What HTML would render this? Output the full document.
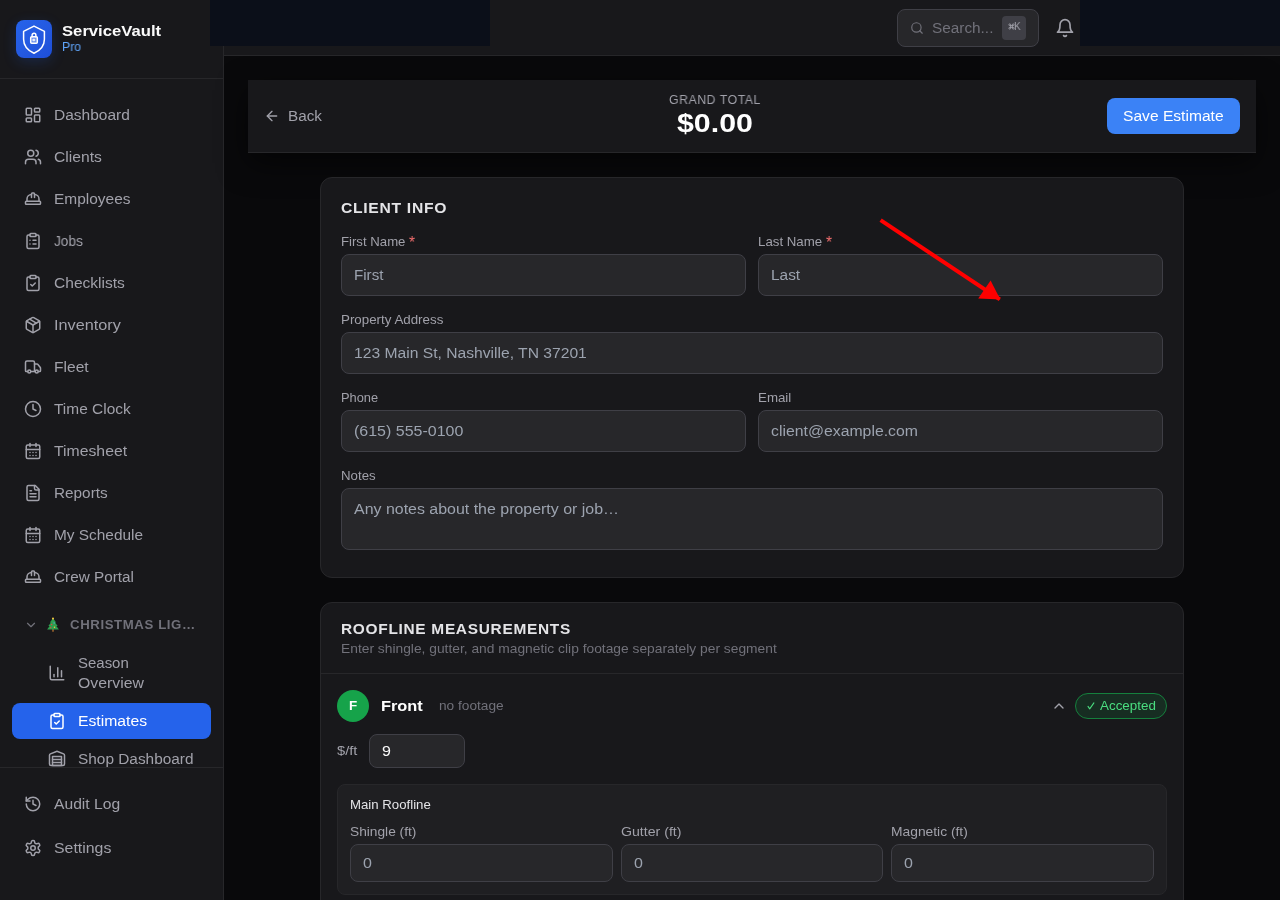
<!DOCTYPE html>
<html lang="en"><head><meta charset="utf-8"><title>ServiceVault Pro - New Estimate</title>
<style>
*{box-sizing:border-box;margin:0;padding:0}
html,body{width:1280px;height:900px;overflow:hidden;background:#09090b}
body{position:relative;font-family:"Liberation Sans",sans-serif;font-size:14px;color:#a1a1aa}
.t{position:absolute;white-space:nowrap;transform-origin:0 50%;will-change:transform}
.ic{position:absolute;display:block;overflow:visible}
.hl{position:absolute;height:1px;background:#27272a}
#sidebar{position:absolute;left:0;top:0;width:224px;height:900px;background:#18181b;border-right:1px solid #27272a}
#logo{position:absolute;left:16px;top:20px;width:36px;height:38px;border-radius:8px;background:linear-gradient(135deg,#2563eb 0%,#2459e0 55%,#1d4ed8 100%);box-shadow:0 4px 14px rgba(37,99,235,.2)}
#logo svg{display:block}
#subclip{position:absolute;left:0;top:640px;width:223px;height:127px;overflow:hidden}
#subclip>*{margin-top:-640px}
#topbar{position:absolute;left:224px;top:0;width:1056px;height:56px;background:#18181b;border-bottom:1px solid #27272a}
#search{position:absolute;left:897px;top:9px;width:142px;height:38px;border-radius:8px;background:#27272a;border:1px solid #3f3f46}
#kbd{position:absolute;left:1002px;top:16px;width:24px;height:24px;border-radius:4px;background:#3f3f46}
.navy{position:absolute;background:#0b0f19}
#sticky{position:absolute;left:248px;top:80px;width:1008px;height:73px;background:#18181b;border-bottom:1px solid #27272a;box-shadow:0 10px 30px rgba(0,0,0,.55)}
#save{position:absolute;left:1107px;top:98px;width:133px;height:36px;border-radius:8px;background:#3b82f6}
.card{position:absolute;background:#18181b;border:1px solid #27272a;border-radius:12px}
.inp{position:absolute;background:#27272a;border:1px solid #3f3f46;border-radius:8px}
#avatar{position:absolute;left:337px;top:690px;width:32px;height:32px;border-radius:50%;background:#16a34a}
#badge{position:absolute;left:1075px;top:693px;width:92px;height:26px;border-radius:13px;background:#172d22;border:1px solid #15803d}
#inner{position:absolute;left:337px;top:784px;width:830px;height:111px;border-radius:8px;background:#1f1f22;border:1px solid #27272a}
</style></head>
<body>
<div id="sidebar">
<div id="logo"><svg width="36" height="38" viewBox="0 0 36 38" fill="none" stroke="#fff" stroke-width="1.5" stroke-linejoin="round" stroke-linecap="round"><path d="M18 6.1 L28.4 11.3 V19.2 C28.4 26 24.2 30.4 18 33.3 C11.8 30.4 7.6 26 7.6 19.2 V11.3 Z"/><rect x="14.7" y="16.8" width="6.6" height="6.4" rx="1" fill="rgba(255,255,255,.35)"/><path d="M16.1 16.8 V15.2 a1.9 1.9 0 0 1 3.8 0 V16.8"/><rect x="17.3" y="19.3" width="1.4" height="1.4" stroke-width="1"/></svg></div>
<div class="t" style="left:62px;top:21.0px;line-height:20px;color:#fafafa;font-size:14.7px;transform:scaleX(1.1342);font-weight:700;">ServiceVault</div>
<div class="t" style="left:62px;top:39.0px;line-height:16px;color:#60a5fa;font-size:12.6px;transform:scaleX(0.9709);">Pro</div>
<div class="hl" style="left:0;top:78px;width:223px"></div>
<svg class="ic" style="left:24px;top:106px" width="18" height="18" viewBox="0 0 24 24" fill="none" stroke="#a1a1aa" stroke-width="2" stroke-linecap="round" stroke-linejoin="round"><rect width="7" height="9" x="3" y="3" rx="1"/><rect width="7" height="5" x="14" y="3" rx="1"/><rect width="7" height="9" x="14" y="12" rx="1"/><rect width="7" height="5" x="3" y="16" rx="1"/></svg>
<div class="t" style="left:54px;top:105.0px;line-height:20px;color:#a1a1aa;font-size:14.7px;transform:scaleX(1.0562);">Dashboard</div>
<svg class="ic" style="left:24px;top:148px" width="18" height="18" viewBox="0 0 24 24" fill="none" stroke="#a1a1aa" stroke-width="2" stroke-linecap="round" stroke-linejoin="round"><path d="M16 21v-2a4 4 0 0 0-4-4H6a4 4 0 0 0-4 4v2"/><circle cx="9" cy="7" r="4"/><path d="M22 21v-2a4 4 0 0 0-3-3.87"/><path d="M16 3.13a4 4 0 0 1 0 7.75"/></svg>
<div class="t" style="left:54px;top:147.0px;line-height:20px;color:#a1a1aa;font-size:14.7px;transform:scaleX(1.0644);">Clients</div>
<svg class="ic" style="left:24px;top:190px" width="18" height="18" viewBox="0 0 24 24" fill="none" stroke="#a1a1aa" stroke-width="2" stroke-linecap="round" stroke-linejoin="round"><path d="M2 18a1 1 0 0 0 1 1h18a1 1 0 0 0 1-1v-2a1 1 0 0 0-1-1H3a1 1 0 0 0-1 1v2z"/><path d="M10 10V5a1 1 0 0 1 1-1h2a1 1 0 0 1 1 1v5"/><path d="M4 15v-3a6 6 0 0 1 6-6"/><path d="M14 6a6 6 0 0 1 6 6v3"/></svg>
<div class="t" style="left:54px;top:189.0px;line-height:20px;color:#a1a1aa;font-size:14.7px;transform:scaleX(1.0538);">Employees</div>
<svg class="ic" style="left:24px;top:232px" width="18" height="18" viewBox="0 0 24 24" fill="none" stroke="#a1a1aa" stroke-width="2" stroke-linecap="round" stroke-linejoin="round"><rect width="8" height="4" x="8" y="2" rx="1" ry="1"/><path d="M16 4h2a2 2 0 0 1 2 2v14a2 2 0 0 1-2 2H6a2 2 0 0 1-2-2V6a2 2 0 0 1 2-2h2"/><path d="M12 11h4"/><path d="M12 16h4"/><path d="M8 11h.01"/><path d="M8 16h.01"/></svg>
<div class="t" style="left:54px;top:231.0px;line-height:20px;color:#a1a1aa;font-size:14.7px;transform:scaleX(0.9299);">Jobs</div>
<svg class="ic" style="left:24px;top:274px" width="18" height="18" viewBox="0 0 24 24" fill="none" stroke="#a1a1aa" stroke-width="2" stroke-linecap="round" stroke-linejoin="round"><rect width="8" height="4" x="8" y="2" rx="1" ry="1"/><path d="M16 4h2a2 2 0 0 1 2 2v14a2 2 0 0 1-2 2H6a2 2 0 0 1-2-2V6a2 2 0 0 1 2-2h2"/><path d="m9 14 2 2 4-4"/></svg>
<div class="t" style="left:54px;top:273.0px;line-height:20px;color:#a1a1aa;font-size:14.7px;transform:scaleX(1.0588);">Checklists</div>
<svg class="ic" style="left:24px;top:316px" width="18" height="18" viewBox="0 0 24 24" fill="none" stroke="#a1a1aa" stroke-width="2" stroke-linecap="round" stroke-linejoin="round"><path d="m7.5 4.27 9 5.15"/><path d="M21 8a2 2 0 0 0-1-1.73l-7-4a2 2 0 0 0-2 0l-7 4A2 2 0 0 0 3 8v8a2 2 0 0 0 1 1.73l7 4a2 2 0 0 0 2 0l7-4A2 2 0 0 0 21 16Z"/><path d="m3.3 7 8.7 5 8.7-5"/><path d="M12 22V12"/></svg>
<div class="t" style="left:54px;top:315.0px;line-height:20px;color:#a1a1aa;font-size:14.7px;transform:scaleX(1.1059);">Inventory</div>
<svg class="ic" style="left:24px;top:358px" width="18" height="18" viewBox="0 0 24 24" fill="none" stroke="#a1a1aa" stroke-width="2" stroke-linecap="round" stroke-linejoin="round"><path d="M14 18V6a2 2 0 0 0-2-2H4a2 2 0 0 0-2 2v11a1 1 0 0 0 1 1h2"/><path d="M15 18H9"/><path d="M19 18h2a1 1 0 0 0 1-1v-3.65a1 1 0 0 0-.22-.624l-3.48-4.35A1 1 0 0 0 17.52 8H14"/><circle cx="17" cy="18" r="2"/><circle cx="7" cy="18" r="2"/></svg>
<div class="t" style="left:54px;top:357.0px;line-height:20px;color:#a1a1aa;font-size:14.7px;transform:scaleX(1.0605);">Fleet</div>
<svg class="ic" style="left:24px;top:400px" width="18" height="18" viewBox="0 0 24 24" fill="none" stroke="#a1a1aa" stroke-width="2" stroke-linecap="round" stroke-linejoin="round"><circle cx="12" cy="12" r="10"/><polyline points="12 6 12 12 16 14"/></svg>
<div class="t" style="left:54px;top:399.0px;line-height:20px;color:#a1a1aa;font-size:14.7px;transform:scaleX(1.0519);">Time Clock</div>
<svg class="ic" style="left:24px;top:442px" width="18" height="18" viewBox="0 0 24 24" fill="none" stroke="#a1a1aa" stroke-width="2" stroke-linecap="round" stroke-linejoin="round"><path d="M8 2v4"/><path d="M16 2v4"/><rect width="18" height="18" x="3" y="4" rx="2"/><path d="M3 10h18"/><path d="M8 14h.01"/><path d="M12 14h.01"/><path d="M16 14h.01"/><path d="M8 18h.01"/><path d="M12 18h.01"/><path d="M16 18h.01"/></svg>
<div class="t" style="left:54px;top:441.0px;line-height:20px;color:#a1a1aa;font-size:14.7px;transform:scaleX(1.0744);">Timesheet</div>
<svg class="ic" style="left:24px;top:484px" width="18" height="18" viewBox="0 0 24 24" fill="none" stroke="#a1a1aa" stroke-width="2" stroke-linecap="round" stroke-linejoin="round"><path d="M15 2H6a2 2 0 0 0-2 2v16a2 2 0 0 0 2 2h12a2 2 0 0 0 2-2V7Z"/><path d="M14 2v4a2 2 0 0 0 2 2h4"/><path d="M10 9H8"/><path d="M16 13H8"/><path d="M16 17H8"/></svg>
<div class="t" style="left:54px;top:483.0px;line-height:20px;color:#a1a1aa;font-size:14.7px;transform:scaleX(1.0434);">Reports</div>
<svg class="ic" style="left:24px;top:526px" width="18" height="18" viewBox="0 0 24 24" fill="none" stroke="#a1a1aa" stroke-width="2" stroke-linecap="round" stroke-linejoin="round"><path d="M8 2v4"/><path d="M16 2v4"/><rect width="18" height="18" x="3" y="4" rx="2"/><path d="M3 10h18"/><path d="M8 14h.01"/><path d="M12 14h.01"/><path d="M16 14h.01"/><path d="M8 18h.01"/><path d="M12 18h.01"/><path d="M16 18h.01"/></svg>
<div class="t" style="left:54px;top:525.0px;line-height:20px;color:#a1a1aa;font-size:14.7px;transform:scaleX(1.0491);">My Schedule</div>
<svg class="ic" style="left:24px;top:568px" width="18" height="18" viewBox="0 0 24 24" fill="none" stroke="#a1a1aa" stroke-width="2" stroke-linecap="round" stroke-linejoin="round"><path d="M2 18a1 1 0 0 0 1 1h18a1 1 0 0 0 1-1v-2a1 1 0 0 0-1-1H3a1 1 0 0 0-1 1v2z"/><path d="M10 10V5a1 1 0 0 1 1-1h2a1 1 0 0 1 1 1v5"/><path d="M4 15v-3a6 6 0 0 1 6-6"/><path d="M14 6a6 6 0 0 1 6 6v3"/></svg>
<div class="t" style="left:54px;top:567.0px;line-height:20px;color:#a1a1aa;font-size:14.7px;transform:scaleX(1.0413);">Crew Portal</div>
<svg class="ic" style="left:24px;top:617.7px" width="14" height="14" viewBox="0 0 24 24" fill="none" stroke="#71717a" stroke-width="2" stroke-linecap="round" stroke-linejoin="round"><path d="m6 9 6 6 6-6"/></svg>
<svg class="ic" style="left:46.3px;top:617px" width="14" height="15" viewBox="0 0 14 16"><rect x="6" y="12.5" width="2" height="3.2" fill="#8b5a2b"/><path d="M7 1.4 L10.4 5.8 H9.2 L12 9.5 H10.6 L13.3 13.2 H0.7 L3.4 9.5 H2 L4.8 5.8 H3.6 Z" fill="#2e9e4f"/><circle cx="7" cy="1.7" r="1.1" fill="#f5c542"/><circle cx="5.5" cy="8" r=".8" fill="#e74c3c"/><circle cx="8.6" cy="10.8" r=".8" fill="#f5c542"/><circle cx="4.6" cy="11.4" r=".7" fill="#e74c3c"/><circle cx="8.2" cy="6.4" r=".7" fill="#5dade2"/></svg>
<div class="t" style="left:70px;top:616.5px;line-height:16px;color:#71717a;font-size:12.6px;transform:scaleX(1.0482);letter-spacing:0.572px;font-weight:700;">CHRISTMAS LIG…</div>
<div id="subclip">
<svg class="ic" style="left:48px;top:664px" width="18" height="18" viewBox="0 0 24 24" fill="none" stroke="#a1a1aa" stroke-width="2" stroke-linecap="round" stroke-linejoin="round"><path d="M3 3v16a2 2 0 0 0 2 2h16"/><path d="M18 17V9"/><path d="M13 17V5"/><path d="M8 17v-3"/></svg>
<div class="t" style="left:78px;top:653.0px;line-height:20px;color:#a1a1aa;font-size:14.7px;transform:scaleX(1.0192);">Season</div>
<div class="t" style="left:78px;top:673.0px;line-height:20px;color:#a1a1aa;font-size:14.7px;transform:scaleX(1.0759);">Overview</div>
<div style="position:absolute;left:12px;top:703px;width:199px;height:36px;border-radius:8px;background:#2563eb"></div>
<svg class="ic" style="left:48px;top:712px" width="18" height="18" viewBox="0 0 24 24" fill="none" stroke="#fff" stroke-width="2" stroke-linecap="round" stroke-linejoin="round"><rect width="8" height="4" x="8" y="2" rx="1" ry="1"/><path d="M16 4h2a2 2 0 0 1 2 2v14a2 2 0 0 1-2 2H6a2 2 0 0 1-2-2V6a2 2 0 0 1 2-2h2"/><path d="m9 14 2 2 4-4"/></svg>
<div class="t" style="left:78px;top:711.0px;line-height:20px;color:#fff;font-size:14.7px;transform:scaleX(1.0712);">Estimates</div>
<svg class="ic" style="left:48px;top:749.4px" width="18" height="18" viewBox="0 0 24 24" fill="none" stroke="#a1a1aa" stroke-width="2" stroke-linecap="round" stroke-linejoin="round"><path d="M22 8.35V20a2 2 0 0 1-2 2H4a2 2 0 0 1-2-2V8.35A2 2 0 0 1 3.26 6.5l8-3.2a2 2 0 0 1 1.48 0l8 3.2A2 2 0 0 1 22 8.35Z"/><path d="M6 18h12"/><path d="M6 14h12"/><rect width="12" height="12" x="6" y="10"/></svg>
<div class="t" style="left:78px;top:749.0px;line-height:20px;color:#a1a1aa;font-size:14.7px;transform:scaleX(1.0479);">Shop Dashboard</div>
</div>
<div class="hl" style="left:0;top:767px;width:223px"></div>
<svg class="ic" style="left:24px;top:795px" width="18" height="18" viewBox="0 0 24 24" fill="none" stroke="#a1a1aa" stroke-width="2" stroke-linecap="round" stroke-linejoin="round"><path d="M3 12a9 9 0 1 0 9-9 9.75 9.75 0 0 0-6.74 2.74L3 8"/><path d="M3 3v5h5"/><path d="M12 7v5l4 2"/></svg>
<div class="t" style="left:54px;top:794.0px;line-height:20px;color:#a1a1aa;font-size:14.7px;transform:scaleX(1.0653);">Audit Log</div>
<svg class="ic" style="left:24px;top:839px" width="18" height="18" viewBox="0 0 24 24" fill="none" stroke="#a1a1aa" stroke-width="2" stroke-linecap="round" stroke-linejoin="round"><path d="M12.22 2h-.44a2 2 0 0 0-2 2v.18a2 2 0 0 1-1 1.73l-.43.25a2 2 0 0 1-2 0l-.15-.08a2 2 0 0 0-2.73.73l-.22.38a2 2 0 0 0 .73 2.73l.15.1a2 2 0 0 1 1 1.72v.51a2 2 0 0 1-1 1.74l-.15.09a2 2 0 0 0-.73 2.73l.22.38a2 2 0 0 0 2.73.73l.15-.08a2 2 0 0 1 2 0l.43.25a2 2 0 0 1 1 1.73V20a2 2 0 0 0 2 2h.44a2 2 0 0 0 2-2v-.18a2 2 0 0 1 1-1.73l.43-.25a2 2 0 0 1 2 0l.15.08a2 2 0 0 0 2.73-.73l.22-.39a2 2 0 0 0-.73-2.73l-.15-.08a2 2 0 0 1-1-1.74v-.5a2 2 0 0 1 1-1.74l.15-.09a2 2 0 0 0 .73-2.73l-.22-.38a2 2 0 0 0-2.73-.73l-.15.08a2 2 0 0 1-2 0l-.43-.25a2 2 0 0 1-1-1.73V4a2 2 0 0 0-2-2z"/><circle cx="12" cy="12" r="3"/></svg>
<div class="t" style="left:54px;top:838.0px;line-height:20px;color:#a1a1aa;font-size:14.7px;transform:scaleX(1.0811);">Settings</div>
</div>
<div id="topbar"></div>
<div id="search"></div>
<svg class="ic" style="left:909.7px;top:21px" width="14" height="14" viewBox="0 0 24 24" fill="none" stroke="#71717a" stroke-width="2" stroke-linecap="round" stroke-linejoin="round"><circle cx="11" cy="11" r="8"/><path d="m21 21-4.3-4.3"/></svg>
<div class="t" style="left:932px;top:18.0px;line-height:20px;color:#71717a;font-size:14.7px;transform:scaleX(1.0445);">Search...</div>
<div id="kbd"></div>
<svg class="ic" style="left:1007.5px;top:22.5px" width="7" height="7" viewBox="0 0 24 24" fill="none" stroke="#a1a1aa" stroke-width="3"><path d="M15 6v12a3 3 0 1 0 3-3H6a3 3 0 1 0 3 3V6a3 3 0 1 0-3 3h12a3 3 0 1 0-3-3"/></svg>
<div class="t" style="left:1014.3px;top:20.4px;line-height:12px;color:#a1a1aa;font-size:10.5px;transform:scaleX(0.9363);">K</div>
<svg class="ic" style="left:1055px;top:18px" width="20" height="20" viewBox="0 0 24 24" fill="none" stroke="#a1a1aa" stroke-width="2" stroke-linecap="round" stroke-linejoin="round"><path d="M6 8a6 6 0 0 1 12 0c0 7 3 9 3 9H3s3-2 3-9"/><path d="M10.3 21a1.94 1.94 0 0 0 3.4 0"/></svg>
<div class="navy" style="left:210px;top:0;width:280px;height:45.5px"></div>
<div class="navy" style="left:1080px;top:0;width:200px;height:45.5px"></div>
<div id="sticky"></div>
<svg class="ic" style="left:264px;top:108px" width="16" height="16" viewBox="0 0 24 24" fill="none" stroke="#a1a1aa" stroke-width="2" stroke-linecap="round" stroke-linejoin="round"><path d="m12 19-7-7 7-7"/><path d="M19 12H5"/></svg>
<div class="t" style="left:288px;top:106.0px;line-height:20px;color:#a1a1aa;font-size:14.7px;transform:scaleX(1.0400);">Back</div>
<div class="t" style="left:668.77px;top:91.5px;line-height:16px;color:#a1a1aa;font-size:12.6px;transform:scaleX(0.9687);letter-spacing:0.619px;">GRAND TOTAL</div>
<div class="t" style="left:676.84px;top:106.6px;line-height:32px;color:#fff;font-size:25.2px;transform:scaleX(1.2038);font-weight:700;">$0.00</div>
<div id="save"></div>
<div class="t" style="left:1123px;top:106.0px;line-height:20px;color:#fff;font-size:14.7px;transform:scaleX(1.0620);">Save Estimate</div>
<div class="card" style="left:320px;top:177px;width:864px;height:401px"></div>
<div class="t" style="left:341px;top:198.0px;line-height:20px;color:#e4e4e7;font-size:14.7px;transform:scaleX(1.0674);letter-spacing:0.656px;font-weight:700;">CLIENT INFO</div>
<div class="t" style="left:341px;top:234.0px;line-height:16px;color:#a1a1aa;font-size:12.6px;transform:scaleX(1.0465);">First Name</div>
<div class="t" style="left:409.28515625px;top:234.8px;line-height:16px;color:#f87171;font-size:16.8px;transform:scaleX(0.9177);">*</div>
<div class="inp" style="left:341px;top:254px;width:405px;height:42px"></div>
<div class="t" style="left:354px;top:265.0px;line-height:20px;color:#9ca3af;font-size:14.7px;transform:scaleX(1.0311);">First</div>
<div class="t" style="left:758px;top:234.0px;line-height:16px;color:#a1a1aa;font-size:12.6px;transform:scaleX(1.0539);">Last Name</div>
<div class="t" style="left:826.02734375px;top:234.8px;line-height:16px;color:#f87171;font-size:16.8px;transform:scaleX(0.9177);">*</div>
<div class="inp" style="left:758px;top:254px;width:405px;height:42px"></div>
<div class="t" style="left:771px;top:265.0px;line-height:20px;color:#9ca3af;font-size:14.7px;transform:scaleX(1.0496);">Last</div>
<div class="t" style="left:341px;top:312.0px;line-height:16px;color:#a1a1aa;font-size:12.6px;transform:scaleX(1.0593);">Property Address</div>
<div class="inp" style="left:341px;top:332px;width:822px;height:42px"></div>
<div class="t" style="left:354px;top:343.0px;line-height:20px;color:#9ca3af;font-size:14.7px;transform:scaleX(1.0654);">123 Main St, Nashville, TN 37201</div>
<div class="t" style="left:341px;top:390.0px;line-height:16px;color:#a1a1aa;font-size:12.6px;transform:scaleX(1.0202);">Phone</div>
<div class="inp" style="left:341px;top:410px;width:405px;height:42px"></div>
<div class="t" style="left:354px;top:421.0px;line-height:20px;color:#9ca3af;font-size:14.7px;transform:scaleX(1.0893);">(615) 555-0100</div>
<div class="t" style="left:758px;top:390.0px;line-height:16px;color:#a1a1aa;font-size:12.6px;transform:scaleX(1.0567);">Email</div>
<div class="inp" style="left:758px;top:410px;width:405px;height:42px"></div>
<div class="t" style="left:771px;top:421.0px;line-height:20px;color:#9ca3af;font-size:14.7px;transform:scaleX(1.0761);">client@example.com</div>
<div class="t" style="left:341px;top:468.0px;line-height:16px;color:#a1a1aa;font-size:12.6px;transform:scaleX(1.0530);">Notes</div>
<div class="inp" style="left:341px;top:488px;width:822px;height:62px"></div>
<div class="t" style="left:354px;top:499.0px;line-height:20px;color:#9ca3af;font-size:14.7px;transform:scaleX(1.0856);">Any notes about the property or job…</div>
<div class="card" style="left:320px;top:602px;width:864px;height:340px"></div>
<div class="t" style="left:341px;top:619.0px;line-height:20px;color:#e4e4e7;font-size:14.7px;transform:scaleX(1.0508);letter-spacing:0.666px;font-weight:700;">ROOFLINE MEASUREMENTS</div>
<div class="t" style="left:341px;top:641.0px;line-height:16px;color:#71717a;font-size:12.6px;transform:scaleX(1.0958);">Enter shingle, gutter, and magnetic clip footage separately per segment</div>
<div class="hl" style="left:321px;top:673px;width:862px"></div>
<div id="avatar"></div>
<div class="t" style="left:348.9px;top:698.0px;line-height:16px;color:#fff;font-size:12.6px;transform:scaleX(1.0651);font-weight:700;">F</div>
<div class="t" style="left:381px;top:696.0px;line-height:20px;color:#fff;font-size:14.7px;transform:scaleX(1.1144);font-weight:700;">Front</div>
<div class="t" style="left:439px;top:698.0px;line-height:16px;color:#71717a;font-size:12.6px;transform:scaleX(1.0869);">no footage</div>
<svg class="ic" style="left:1051px;top:698px" width="16" height="16" viewBox="0 0 24 24" fill="none" stroke="#a1a1aa" stroke-width="2" stroke-linecap="round" stroke-linejoin="round"><path d="m18 15-6-6-6 6"/></svg>
<div id="badge"></div>
<svg class="ic" style="left:1087px;top:702px" width="8" height="8" viewBox="0 0 8 8" fill="none" stroke="#4ade80" stroke-width="1.05" stroke-linecap="round" stroke-linejoin="round"><path d="M1 4.4 L2.7 6.9 L6.9 0.9"/></svg>
<div class="t" style="left:1100px;top:698.0px;line-height:16px;color:#4ade80;font-size:12.6px;transform:scaleX(1.0640);">Accepted</div>
<div class="t" style="left:337px;top:743.0px;line-height:16px;color:#a1a1aa;font-size:12.6px;transform:scaleX(1.1649);">$/ft</div>
<div class="inp" style="left:369px;top:734px;width:96px;height:34px"></div>
<div class="t" style="left:382px;top:741.0px;line-height:20px;color:#fafafa;font-size:14.7px;transform:scaleX(1.0895);">9</div>
<div id="inner"></div>
<div class="t" style="left:350px;top:797.0px;line-height:16px;color:#e4e4e7;font-size:12.6px;transform:scaleX(1.0491);">Main Roofline</div>
<div class="t" style="left:350px;top:824.0px;line-height:16px;color:#a1a1aa;font-size:12.6px;transform:scaleX(1.0897);">Shingle (ft)</div>
<div class="inp" style="left:350px;top:844px;width:262.67px;height:38px"></div>
<div class="t" style="left:363px;top:853.0px;line-height:20px;color:#9ca3af;font-size:14.7px;transform:scaleX(1.0895);">0</div>
<div class="t" style="left:620.67px;top:824.0px;line-height:16px;color:#a1a1aa;font-size:12.6px;transform:scaleX(1.1228);">Gutter (ft)</div>
<div class="inp" style="left:620.67px;top:844px;width:262.67px;height:38px"></div>
<div class="t" style="left:633.67px;top:853.0px;line-height:20px;color:#9ca3af;font-size:14.7px;transform:scaleX(1.0895);">0</div>
<div class="t" style="left:891.33px;top:824.0px;line-height:16px;color:#a1a1aa;font-size:12.6px;transform:scaleX(1.0975);">Magnetic (ft)</div>
<div class="inp" style="left:891.33px;top:844px;width:262.67px;height:38px"></div>
<div class="t" style="left:904.33px;top:853.0px;line-height:20px;color:#9ca3af;font-size:14.7px;transform:scaleX(1.0895);">0</div>
<svg class="ic" style="left:0;top:0" width="1280" height="900" viewBox="0 0 1280 900"><line x1="880.6" y1="220.2" x2="999.8" y2="299.3" stroke="#ff0000" stroke-width="4"/><polygon points="1000.3,299.6 978.2,298.4 990.6,280.6" fill="#ff0000"/></svg>
</body></html>
